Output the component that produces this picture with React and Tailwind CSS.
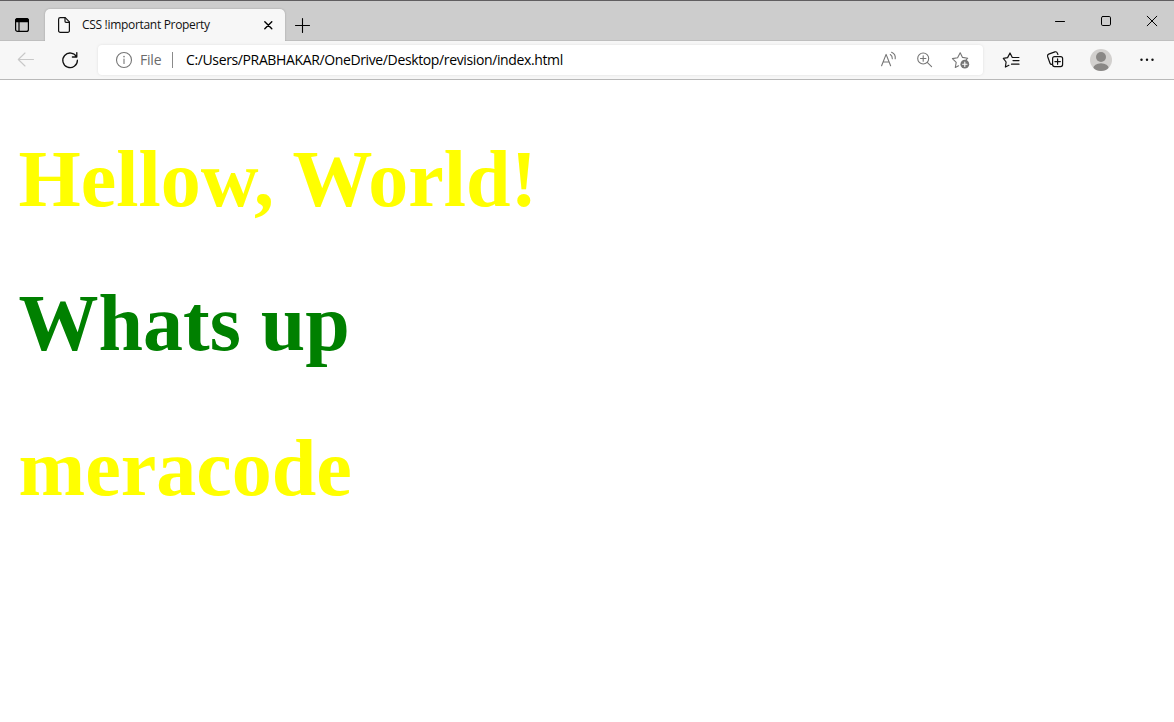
function Icon({ size = 20, sw = 1, className = "", children }) {
  return (
    <svg
      width={size}
      height={size}
      viewBox={`0 0 ${size} ${size}`}
      fill="none"
      stroke="currentColor"
      strokeWidth={sw}
      strokeLinecap="round"
      strokeLinejoin="round"
      className={`block shrink-0 ${className}`}
    >
      {children}
    </svg>
  );
}

function TabStrip() {
  return (
    <div className="flex h-[41px] items-end bg-[#cdcdcd] shadow-[inset_0_1px_0_#605e60,inset_0_-1px_0_#bfbfbf]">
      <div className="flex h-8 w-[45px] items-center pl-[14px]">
        <Icon size={16} sw={1.2} className="text-black">
          <rect x="1.6" y="1.6" width="12.8" height="12.8" rx="2" />
          <path d="M1.6 3.6a2 2 0 0 1 2-2h8.8a2 2 0 0 1 2 2v1H1.6z" fill="currentColor" />
          <path d="M5 5v9.3" />
        </Icon>
      </div>
      <div className="flex h-8 w-60 items-center rounded-t-[5px] bg-[#f7f7f7] pl-[10px] pr-[8px] shadow-[0_0_2px_rgba(0,0,0,0.25)] [clip-path:inset(-3px_-3px_0_-3px)]">
        <Icon size={18} sw={1.2} className="text-[#111]">
          <path d="M5.3 1.6h4.9l4.2 4.2v8.9a1.7 1.7 0 0 1-1.7 1.7H5.3a1.7 1.7 0 0 1-1.7-1.7V3.3a1.7 1.7 0 0 1 1.7-1.7z" />
          <path d="M10 1.8v3.5c0 .6.4 1 1 1h3.3" />
        </Icon>
        <span className="ml-[9px] flex-1 whitespace-nowrap text-[12px] leading-4 tracking-[-0.31px] text-[#111]">
          CSS !important Property
        </span>
        <Icon size={18} sw={1.4} className="text-black">
          <path d="m5.8 5.8 7 7M12.8 5.8l-7 7" />
        </Icon>
      </div>
      <div className="flex h-[33px] w-[35px] items-center pl-[9px]">
        <Icon size={16} sw={1.1} className="text-black">
          <path d="M8.5 1.5v14M1.5 8.5h14" />
        </Icon>
      </div>
      <div className="ml-auto flex h-10 pb-px text-black">
        <div className="flex w-[46px] items-center justify-center">
          <Icon size={12}><path d="M1.5 6.5h9" /></Icon>
        </div>
        <div className="flex w-[46px] items-center justify-center">
          <Icon size={12}><rect x="1.5" y="1.5" width="9" height="9" rx="1.3" /></Icon>
        </div>
        <div className="flex w-[45px] items-center justify-center">
          <Icon size={12} sw={1}><path d="m1.2 1.2 9.6 9.6M10.8 1.2l-9.6 9.6" /></Icon>
        </div>
      </div>
    </div>
  );
}

function AddressBar() {
  return (
    <div className="flex h-[30px] w-[885px] items-center rounded-[4px] bg-white pl-[16px] pr-[12px] shadow-[0_0_3px_rgba(0,0,0,0.1)]">
      <Icon size={20} sw={1.1} className="text-[#767676]">
        <circle cx="10" cy="10" r="7.5" />
        <path d="M10 9v4.5" />
        <path d="M10 6.6v.1" strokeWidth="1.5" />
      </Icon>
      <span className="ml-[6px] w-[32px] text-[14px] leading-5 tracking-[-0.2px] text-[#6b6b6b]">File</span>
      <span className="h-[16px] w-px bg-[#8a8a8a]" />
      <span className="ml-[13px] flex-1 whitespace-nowrap text-[14px] leading-5 tracking-[-0.37px] text-black">
        C:/Users/PRABHAKAR/OneDrive/Desktop/revision/index.html
      </span>
      <div className="flex items-center gap-4 text-[#767676]">
        <Icon size={20} sw={1.1}>
          <path d="M2.6 15.7 7.1 4.4l4.5 11.3M4.1 12h6" />
          <path d="M11.3 4.5c1.3.8 2.1 2.4 2 4.3M12.6 2.3c2.6 1.1 4 3.7 3.6 6.5" />
        </Icon>
        <Icon size={20} sw={1.1}>
          <circle cx="8.2" cy="8.5" r="5.5" />
          <path d="M8.2 5.8v5.4M5.5 8.5h5.4M12.2 12.4l4.4 4.2" />
        </Icon>
        <Icon size={20} sw={1.1}>
          <path d="m9.2 2.7 2.3 4.7 5.2.8-2 2.1M7.6 15.8l-3.3 1.7.9-5.2-3.8-3.7 5.2-.8 2.6-5.1" />
          <circle cx="13.8" cy="14.2" r="4.4" fill="currentColor" stroke="none" />
          <path d="M13.8 12v4.4M11.6 14.2H16" stroke="white" />
        </Icon>
      </div>
    </div>
  );
}

function Toolbar() {
  return (
    <div className="flex h-[39px] items-center border-b border-[#b9b9b9] bg-[#f7f7f7] text-[#111]">
      <div className="flex w-[98px] items-center pl-4">
        <Icon size={20} sw={1.1} className="text-[#c8c8c8]">
          <path d="M17.5 9.5h-15M9 3 2.3 9.5 9 16" />
        </Icon>
        <Icon size={20} sw={1.3} className="ml-6">
          <path d="M16.6 7A7.3 7.3 0 1 0 17.4 10.2M16.8 2.6V7h-4.4" />
        </Icon>
      </div>
      <AddressBar />
      <div className="flex flex-1 items-center pl-[18px]">
        <Icon size={20} sw={1.2}>
          <path d="M7.9 15.3 4.4 17l.7-5-2.8-3.6 4.3-.8L9 3l2.3 4.5h6.6M12 10.6h6M10.5 14.2h7.5" />
        </Icon>
        <Icon size={20} sw={1.2} className="ml-[25px]">
          <path d="M5.9 14.4c-.8.1-1.6-.4-1.9-1.2L1.6 6.5c-.3-1 .1-2 1.1-2.4l6.2-2.2c1-.3 2.1.2 2.4 1.1l.6 1.5" />
          <rect x="6.6" y="6.6" width="10" height="10" rx="2" />
          <path d="M11.6 8.9v5.4M8.9 11.6h5.4" />
        </Icon>
        <svg width="22" height="22" viewBox="0 0 22 22" className="ml-6 block shrink-0">
          <clipPath id="avatar"><circle cx="11" cy="11" r="11" /></clipPath>
          <g clipPath="url(#avatar)">
            <rect width="22" height="22" fill="#d2d0ce" />
            <circle cx="11" cy="8" r="5" fill="#8a8886" />
            <ellipse cx="11" cy="19.5" rx="7.8" ry="5.3" fill="#8a8886" />
          </g>
        </svg>
        <Icon size={20} className="ml-[25px]">
          <g fill="currentColor" stroke="none">
            <circle cx="4.5" cy="9.7" r="1.2" />
            <circle cx="10" cy="9.7" r="1.2" />
            <circle cx="15.5" cy="9.7" r="1.2" />
          </g>
        </Icon>
      </div>
    </div>
  );
}

export default function App() {
  return (
    <div className="flex h-[722px] w-[1174px] flex-col overflow-hidden bg-white font-['Open_Sans','Noto_Sans',sans-serif]">
      <TabStrip />
      <Toolbar />
      <main className="flex flex-col gap-[52.6px] pl-[18.5px] pt-[52.5px] font-['Liberation_Serif',serif] text-[80px] font-bold leading-[92px]">
        <h1 className="text-[#ffff00]">Hellow, World!</h1>
        <h1 className="text-[#008000]">Whats up</h1>
        <h1 className="text-[#ffff00]">meracode</h1>
      </main>
    </div>
  );
}
